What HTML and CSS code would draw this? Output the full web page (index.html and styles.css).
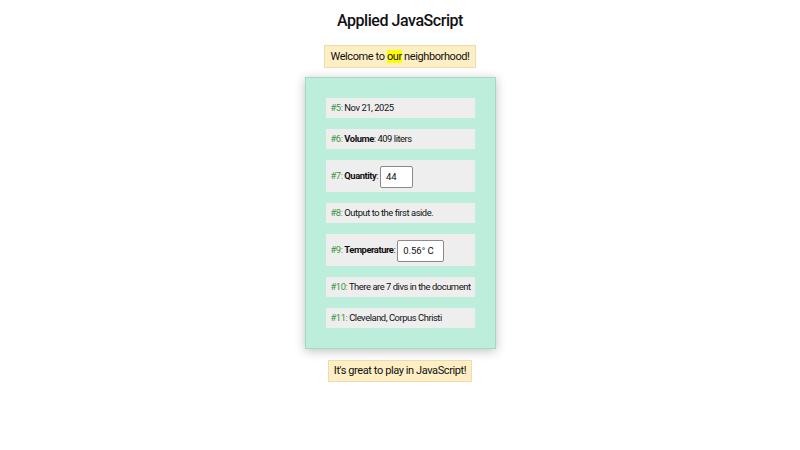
FILE: index.html
```html
<!DOCTYPE html>
<html>
<head>
<meta charset="utf-8">
<link rel="stylesheet" href="styles.css">
</head>
<body>
<div class="page">
  <h1 class="title">Applied JavaScript</h1>
  <header class="note">Welcome to <mark class="hl">our</mark> neighborhood!</header>
  <main class="panel">
    <div class="item"><span class="num">#5:</span> Nov 21, 2025</div>
    <div class="item"><span class="num">#6:</span> <b>Volume</b>: 409 liters</div>
    <div class="item tall"><span class="num">#7:</span> <b>Quantity</b>: <span class="field f1">44</span></div>
    <div class="item"><span class="num">#8:</span> Output to the first aside.</div>
    <div class="item tall"><span class="num">#9:</span> <b>Temperature</b>: <span class="field f2">0.56° C</span></div>
    <div class="item"><span class="num">#10:</span> There are 7 divs in the document</div>
    <div class="item"><span class="num">#11:</span> Cleveland, Corpus Christi</div>
  </main>
  <footer class="note foot">It's great to play in JavaScript!</footer>
</div>
</body>
</html>
```

FILE: styles.css
```css
html, body { margin: 0; padding: 0; background: #fff; }
body { font-family: Roboto, "Liberation Sans", sans-serif; color: #111; }
.page { display: flex; flex-direction: column; align-items: center; }
.title { font-size: 16px; font-weight: 500; letter-spacing: -0.45px; margin: 10px 0 0; height: 22px; line-height: 22px; }
.note { margin-top: 13px; background: #fdeec3; border: 1px solid #efdcaa; font-size: 11px; letter-spacing: -0.4px; height: 21px; line-height: 21px; padding: 0 5px; }
.hl { background: #ffff00; color: #111; }
.panel { margin-top: 9px; width: 149px; padding: 20px; background: #bdeedb; border: 1px solid #a7d8c5; box-shadow: 0 2px 10px rgba(0,0,0,0.25); display: flex; flex-direction: column; gap: 11px; }
.item { background: #eeeeee; height: 20px; line-height: 20px; font-size: 9.4px; letter-spacing: -0.45px; padding: 0 5px; white-space: nowrap; }
.item b { font-weight: 700; }
.item .num { color: #3a963a; }
.item.tall { height: 32px; line-height: 32px; }
.field { display: inline-block; vertical-align: middle; background: #fff; border: 1px solid #8a8a8a; border-radius: 2px; height: 22px; line-height: 20px; padding: 0 5px; box-sizing: border-box; letter-spacing: 0; font-size: 9.5px; }
.f1 { width: 33px; }
.f2 { width: 47px; }
.foot { margin-top: 11px; height: 20px; line-height: 20px; }
```
